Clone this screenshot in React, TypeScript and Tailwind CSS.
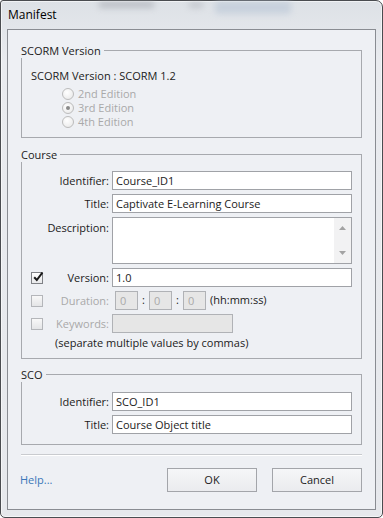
import type { ReactNode } from 'react';

const line = 'border-[#a7a9ae]';

function Group({ title, className = '', bodyClass = '', children }: { title: string; className?: string; bodyClass?: string; children: ReactNode }) {
  return (
    <div className={className}>
      <div className="flex h-[15px] items-start">
        <span className="pr-[3px] leading-[15px]">{title}</span>
        <div className={`mt-[7px] h-[8px] flex-1 border-t border-r ${line}`} />
      </div>
      <div className={`border-x border-b ${line} ${bodyClass}`}>{children}</div>
    </div>
  );
}

function Radio({ label, checked = false }: { label: string; checked?: boolean }) {
  return (
    <div className="flex h-[14px] items-center gap-[4px] text-[#a9a9a9]">
      <span className="flex h-[12px] w-[12px] items-center justify-center rounded-full border border-[#bcbcbc] bg-[radial-gradient(circle_at_40%_35%,#ffffff,#e6e6e6)]">
        {checked && <span className="h-[4px] w-[4px] rounded-full bg-[#8a8a8a]" />}
      </span>
      <span className="leading-[14px]">{label}</span>
    </div>
  );
}

function Check({ checked = false, dim = false }: { checked?: boolean; dim?: boolean }) {
  return (
    <span
      className={`relative ml-[9px] h-[12px] w-[12px] shrink-0 border ${
        dim ? 'border-[#b4b6ba] bg-[linear-gradient(#f8f8f8,#e4e5e7)]' : 'border-[#7f8186] bg-[linear-gradient(#ffffff,#e8e9eb)]'
      }`}
    >
      {checked && (
        <svg viewBox="0 0 12 12" className="absolute left-[0px] top-[-2px] h-[12px] w-[12px]">
          <path d="M2.2 6.2 L4.8 9 L10.4 1.6" fill="none" stroke="#1a1a1a" strokeWidth="2" />
        </svg>
      )}
    </span>
  );
}

function Row({ label, check, dim = false, checked = false, children, top = false }: { label: string; check?: boolean; dim?: boolean; checked?: boolean; children: ReactNode; top?: boolean }) {
  return (
    <div className={`flex ${top ? 'items-start' : 'items-center'}`}>
      <div className={`flex w-[87px] ${top ? 'pt-[3px]' : ''} items-center`}>
        {check && <Check checked={checked} dim={dim} />}
        <span className={`ml-auto leading-[15px] ${dim ? 'text-[#a9a9a9]' : ''}`}>{label}</span>
      </div>
      <div className="ml-[3px] flex flex-1 items-center">{children}</div>
    </div>
  );
}

function Input({ value, className = 'flex-1' }: { value: string; className?: string }) {
  return <div className={`h-[19px] border border-[#a0a2a7] bg-white px-[3px] leading-[17px] ${className}`}>{value}</div>;
}

function Dim({ value = '', className }: { value?: string; className: string }) {
  return (
    <div className={`h-[19px] border border-[#b0b2b6] bg-[#e6e6e6] px-[4px] leading-[17px] text-[#a9a9a9] ${className}`}>{value}</div>
  );
}

export default function App() {
  return (
    <div className="flex h-[518px] w-[383px] flex-col rounded-tl-[3px] rounded-tr-[7px] rounded-b-[5px] border border-[#4a4c50] bg-[linear-gradient(#dde1e6,#e9ebef_60px,#e6e8ec)] pb-[7px] font-['Open_Sans',sans-serif] text-[11px] text-[#1b1b1b] shadow-[inset_0_0_0_1px_rgba(255,255,255,0.6)]">
      <div className="flex h-[28px] items-start pl-[7px]">
        <span className="self-center text-[12px] leading-[16px] text-black">Manifest</span>
        <div className="ml-[42px] mt-[0px] h-[7px] w-[55px] bg-[#9a9ea6] opacity-50 blur-[3px]" />
        <div className="ml-[35px] mt-[1px] h-[6px] w-[14px] bg-[#9a9ea6] opacity-40 blur-[3px]" />
        <div className="ml-[12px] mt-[0px] h-[13px] w-[76px] rounded-[3px] bg-[#b9c6d6] opacity-60 blur-[3px]" />
      </div>
      <div className="mx-[6px] flex flex-1 flex-col border border-[#898c92] bg-[#eef0f4] px-[13px] pt-[13px]">
        <Group title="SCORM Version" bodyClass="pl-[9px] pt-[10px] pb-[8px]">
          <div className="leading-[15px]">SCORM Version : SCORM 1.2</div>
          <div className="ml-[31px] mt-[4px]">
            <Radio label="2nd Edition" />
            <Radio label="3rd Edition" checked />
            <Radio label="4th Edition" />
          </div>
        </Group>

        <Group title="Course" className="mt-[9px]" bodyClass="flex flex-col gap-[4px] pt-[9px] pb-[8px] pr-[9px]">
          <Row label="Identifier:">
            <Input value="Course_ID1" />
          </Row>
          <Row label="Title:">
            <Input value="Captivate E-Learning Course" />
          </Row>
          <Row label="Description:" top>
            <div className="flex h-[47px] flex-1 border border-[#a0a2a7] bg-white">
              <div className="flex-1" />
              <div className="flex w-[17px] flex-col items-center justify-between bg-[#f2f2f3] pb-[8px] pt-[8px]">
                <svg width="7" height="4" viewBox="0 0 7 4"><path d="M0 4 L3.5 0 L7 4 Z" fill="#a3a3a3" /></svg>
                <svg width="7" height="4" viewBox="0 0 7 4"><path d="M0 0 L7 0 L3.5 4 Z" fill="#a3a3a3" /></svg>
              </div>
            </div>
          </Row>
          <Row label="Version:" check checked>
            <Input value="1.0" />
          </Row>
          <Row label="Duration:" check dim>
            <Dim value="0" className="ml-[3px] w-[23px]" />
            <span className="w-[11px] text-center">:</span>
            <Dim value="0" className="w-[23px]" />
            <span className="w-[11px] text-center">:</span>
            <Dim value="0" className="w-[23px]" />
            <span className="ml-[4px]">(hh:mm:ss)</span>
          </Row>
          <Row label="Keywords:" check dim>
            <Dim className="w-[121px]" />
          </Row>
          <div className="mt-[-2px] pl-[33px] leading-[15px]">(separate multiple values by commas)</div>
        </Group>

        <Group title="SCO" className="mt-[8px]" bodyClass="flex flex-col gap-[4px] pt-[10px] pb-[10px] pr-[9px]">
          <Row label="Identifier:">
            <Input value="SCO_ID1" />
          </Row>
          <Row label="Title:">
            <Input value="Course Object title" />
          </Row>
        </Group>

        <div className="mt-[9px] border-t border-b border-t-[#c9cbcf] border-b-white" />

        <div className="mt-[12px] flex items-center">
          <span className="-ml-[1px] text-[#3a77b9]">Help...</span>
          <button className="ml-auto h-[24px] w-[90px] border border-[#a3a5aa] bg-[linear-gradient(#f5f6f8,#eaebee)] text-[#1b1b1b]">OK</button>
          <button className="ml-[15px] h-[24px] w-[90px] border border-[#a3a5aa] bg-[linear-gradient(#f5f6f8,#eaebee)] text-[#1b1b1b]">Cancel</button>
        </div>
      </div>
    </div>
  );
}
